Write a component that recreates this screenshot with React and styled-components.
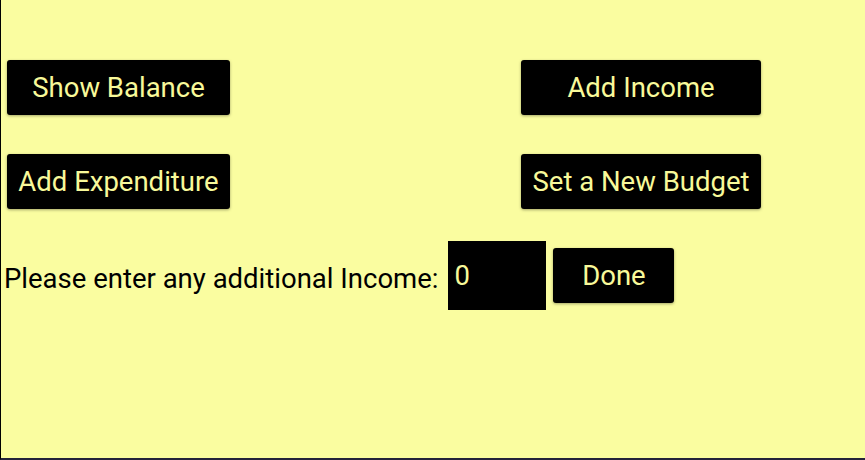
import React from "react";
import styled, { createGlobalStyle } from "styled-components";

const Global = createGlobalStyle`
  html, body { margin: 0; padding: 0; background: #fafda0; }
  #root { width: 865px; height: 460px; }
`;

const Page = styled.div`
  box-sizing: border-box;
  width: 865px;
  height: 460px;
  background: #fafda0;
  border-left: 1px solid #000;
  border-bottom: 2px solid #23233a;
  padding-top: 60px;
  font-family: Roboto, "Liberation Sans", sans-serif;
`;

const ButtonGrid = styled.div`
  display: grid;
  grid-template-columns: 223px 240px;
  column-gap: 291px;
  row-gap: 39px;
  padding-left: 6px;
`;

const ActionButton = styled.button`
  box-sizing: border-box;
  width: ${(p) => p.$w || "100%"};
  height: 55px;
  border: none;
  border-radius: 3px;
  background: #000;
  color: #f8f99a;
  font-family: Roboto, "Liberation Sans", sans-serif;
  font-size: 27.5px;
  padding: 0;
  box-shadow: 0 1px 3px rgba(0, 0, 0, 0.35);
  cursor: pointer;
`;

const IncomeRow = styled.div`
  display: flex;
  align-items: center;
  margin-top: 32px;
  padding-left: 3px;
`;

const Label = styled.span`
  font-size: 27.5px;
  color: #000;
  margin-right: 10px;
  margin-top: 6px;
`;

const IncomeInput = styled.input`
  box-sizing: border-box;
  width: 98px;
  height: 69px;
  background: #000;
  color: #f8f99a;
  border: none;
  outline: none;
  padding: 0 6px;
  font-family: Roboto, "Liberation Sans", sans-serif;
  font-size: 27.5px;
  margin-right: 7px;
`;

export default function App() {
  return (
    <>
      <Global />
      <Page>
        <ButtonGrid>
          <ActionButton>Show Balance</ActionButton>
          <ActionButton>Add Income</ActionButton>
          <ActionButton>Add Expenditure</ActionButton>
          <ActionButton>Set a New Budget</ActionButton>
        </ButtonGrid>
        <IncomeRow>
          <Label>Please enter any additional Income:</Label>
          <IncomeInput defaultValue="0" />
          <ActionButton $w="121px">Done</ActionButton>
        </IncomeRow>
      </Page>
    </>
  );
}
